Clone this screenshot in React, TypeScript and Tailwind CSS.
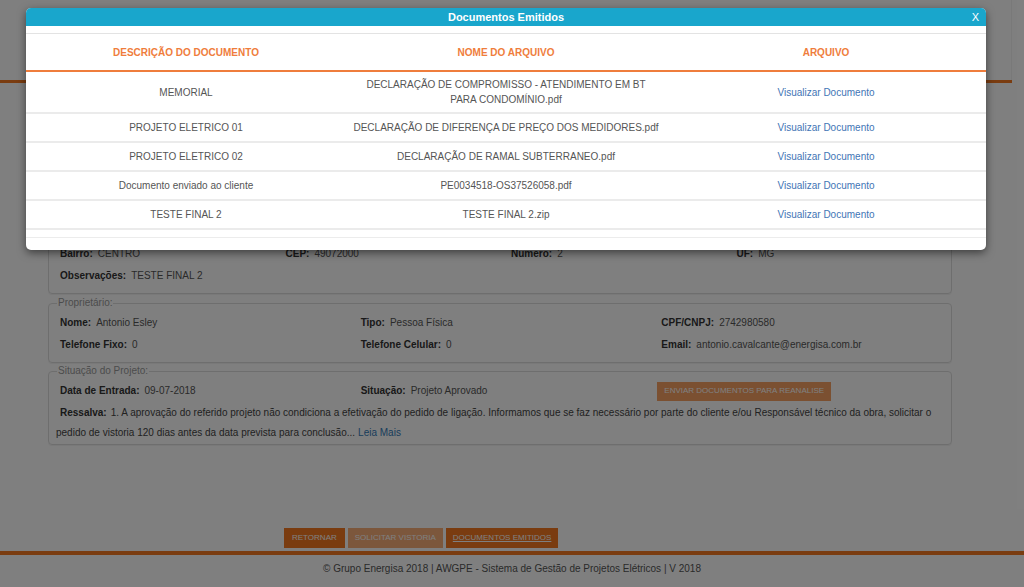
import React from 'react'

type Doc = {
  descricao: string;
  arquivo: string;
};

const docs: Doc[] = [
  { descricao: 'MEMORIAL', arquivo: 'DECLARAÇÃO DE COMPROMISSO - ATENDIMENTO EM BT PARA CONDOMÍNIO.pdf' },
  { descricao: 'PROJETO ELETRICO 01', arquivo: 'DECLARAÇÃO DE DIFERENÇA DE PREÇO DOS MEDIDORES.pdf' },
  { descricao: 'PROJETO ELETRICO 02', arquivo: 'DECLARAÇÃO DE RAMAL SUBTERRANEO.pdf' },
  { descricao: 'Documento enviado ao cliente', arquivo: 'PE0034518-OS37526058.pdf' },
  { descricao: 'TESTE FINAL 2', arquivo: 'TESTE FINAL 2.zip' },
]

function Field({ label, value }: { label: string; value: string }) {
  return (
    <div className="pl-[11px] h-[22px] leading-[22px] whitespace-nowrap">
      <span className="font-bold text-[#333]">{label}:</span>
      <span className="ml-[5px] text-[#555]">{value}</span>
    </div>
  )
}

export default function App() {
  return (
    <div className="relative w-[1024px] h-[587px] overflow-hidden bg-white text-[10px] font-['Liberation_Sans',Arial,sans-serif]">
      {/* page header (covered by the modal) */}
      <div className="h-[80px] w-[1012px] border-r border-[#f2f2f2]" />
      <div className="h-[3px] w-[1012px] bg-[#f47920]" />

      {/* main content */}
      <div className="ml-[48px] w-[904px] pt-[8px]">
        <fieldset className="border border-[#ddd] rounded-[4px] shadow-[0_1px_1px_rgba(0,0,0,0.06)]">
          <div className="h-[151px]" />
          <div className="grid grid-cols-4">
            <Field label="Bairro" value="CENTRO" />
            <Field label="CEP" value="49072000" />
            <Field label="Numero" value="2" />
            <Field label="UF" value="MG" />
          </div>
          <Field label="Observações" value="TESTE FINAL 2" />
          <div className="h-[6px]" />
        </fieldset>

        <fieldset className="mt-[3px] border border-[#ddd] rounded-[4px] shadow-[0_1px_1px_rgba(0,0,0,0.06)]">
          <legend className="ml-[8px] px-[1px] leading-[12px] text-[#999]">Proprietário:</legend>
          <div className="pt-[3px] pb-[6px] grid grid-cols-3">
            <Field label="Nome" value="Antonio Esley" />
            <Field label="Tipo" value="Pessoa Física" />
            <Field label="CPF/CNPJ" value="2742980580" />
            <Field label="Telefone Fixo" value="0" />
            <Field label="Telefone Celular" value="0" />
            <Field label="Email" value="antonio.cavalcante@energisa.com.br" />
          </div>
        </fieldset>

        <fieldset className="mt-[2px] border border-[#ddd] rounded-[4px] shadow-[0_1px_1px_rgba(0,0,0,0.06)]">
          <legend className="ml-[8px] px-[1px] leading-[12px] text-[#999]">Situação do Projeto:</legend>
          <div className="pt-[3px] grid grid-cols-3">
            <Field label="Data de Entrada" value="09-07-2018" />
            <Field label="Situação" value="Projeto Aprovado" />
            <div className="pl-[7px] h-[22px] flex items-center">
              <button className="h-[19px] px-[7px] bg-[#f47920] opacity-70 text-white text-[8px] uppercase">
                Enviar Documentos para Reanalise
              </button>
            </div>
          </div>
          <div className="mt-[1px] pl-[7px] pr-[6px] pb-[1px] leading-[20px] text-[#444] whitespace-nowrap">
            <div className="flex pl-[4px]">
              <span className="font-bold text-[#333]">Ressalva:</span>
              <span className="ml-[4px]">
                1. A aprovação do referido projeto não condiciona a efetivação do pedido de ligação. Informamos que se faz necessário por parte do cliente e/ou Responsável técnico da obra, solicitar o
              </span>
            </div>
            <div className="flex">
              <span>pedido de vistoria 120 dias antes da data prevista para conclusão...</span>
              <a className="ml-[3px] text-[#337ab7]">Leia Mais</a>
            </div>
          </div>
        </fieldset>
      </div>

      {/* action buttons */}
      <div className="mt-[83px] pl-[284px] flex gap-[3px]">
        <button className="h-[20px] px-[8px] bg-[#f47920] text-white text-[8px] uppercase">Retornar</button>
        <button className="h-[20px] px-[7px] bg-[#f47920] opacity-60 text-white text-[8px] uppercase">Solicitar Vistoria</button>
        <button className="h-[20px] px-[7px] bg-[#f47920] text-white text-[8px] uppercase underline">Documentos Emitidos</button>
      </div>

      {/* footer */}
      <div className="mt-[3px] h-[4px] bg-[#f47920]" />
      <div className="h-[28px] leading-[28px] text-center text-[#555]">
        © Grupo Energisa 2018 | AWGPE - Sistema de Gestão de Projetos Elétricos | V 2018
      </div>

      {/* backdrop */}
      <div className="absolute inset-0 bg-black/50" />

      {/* modal */}
      <div className="absolute left-[26px] top-[8px] w-[960px] bg-white rounded-[5px] shadow-[0_3px_9px_rgba(0,0,0,0.5)] overflow-hidden">
        <div className="relative h-[18px] bg-[#19a6cc] flex items-center justify-center">
          <span className="text-white font-bold text-[11px]">Documentos Emitidos</span>
          <span className="absolute right-[7px] top-[3px] text-white text-[11px] leading-[12px]">X</span>
        </div>
        <div className="pt-[7px]">
          <div className="border-t border-[#e3e3e3]">
            <div className="grid grid-cols-3 h-[38px] items-center border-b-2 border-[#ef7d3c] text-center font-bold text-[#ef7d3c]">
              <div>DESCRIÇÃO DO DOCUMENTO</div>
              <div>NOME DO ARQUIVO</div>
              <div>ARQUIVO</div>
            </div>
            {docs.map((doc, i) => (
              <div
                key={doc.arquivo}
                className={`grid grid-cols-3 items-center text-center text-[#555] leading-[15px] border-b-2 border-[#ebebeb] ${i === 0 ? 'h-[42px]' : 'h-[29px]'}`}
              >
                <div className="px-[8px]">{doc.descricao}</div>
                <div className="mx-auto w-[308px]">{doc.arquivo}</div>
                <div>
                  <a className="text-[#3f75b5]">Visualizar Documento</a>
                </div>
              </div>
            ))}
          </div>
          <div className="mt-[7px] h-[13px] border-t border-[#ececec]" />
        </div>
      </div>
    </div>
  )
}
